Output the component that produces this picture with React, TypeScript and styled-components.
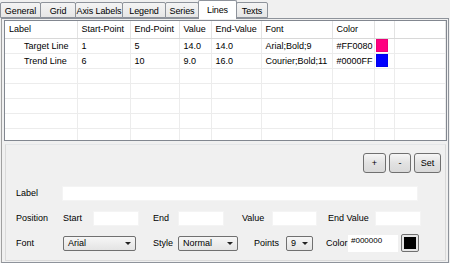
import React from "react";
import styled, { createGlobalStyle } from "styled-components";

const GlobalStyle = createGlobalStyle`
	html, body {
		margin: 0;
		padding: 0;
		background: #f0f0f0;
	}
	* {
		box-sizing: border-box;
	}
`;

const Window = styled.div`
	width: 450px;
	height: 263px;
	background: #f0f0f0;
	font-family: "Liberation Sans", Arial, sans-serif;
	font-size: 9px;
	color: #000;
	display: flex;
	flex-direction: column;
	overflow: hidden;
`;

const TabBar = styled.div`
	display: flex;
	align-items: flex-end;
	height: 19px;
	position: relative;
	z-index: 1;
`;

const Tab = styled.div<{ $width: number; $active?: boolean }>`
	width: ${p => p.$width}px;
	height: ${p => (p.$active ? 19 : 16)}px;
	margin-bottom: ${p => (p.$active ? -1 : 0)}px;
	display: flex;
	align-items: center;
	justify-content: center;
	padding-top: ${p => (p.$active ? 0 : 1)}px;
	border: 1px solid #8e939b;
	border-bottom: ${p => (p.$active ? "none" : "1px solid #8e939b")};
	margin-right: -1px;
	border-radius: 2px 2px 0 0;
	background: ${p => (p.$active ? "#fff" : "linear-gradient(#f4f4f4, #e6e6e6)")};
	white-space: nowrap;
	letter-spacing: -0.1px;
`;

const Pane = styled.div`
	flex: 1;
	border: 1px solid #8e939b;
	border-left-color: #a0a0a0;
	margin: 0 1px 3px 1px;
	padding: 1px 1px 1px 1px;
	display: flex;
	flex-direction: column;
	gap: 3px;
`;

const TableFrame = styled.div`
	height: 121px;
	margin-left: 1px;
	background: #fff;
	border: 1px solid #828790;
	overflow: hidden;
`;

const Grid = styled.table`
	border-collapse: collapse;
	table-layout: fixed;
	width: 100%;
`;

const HeadCell = styled.th<{ $width?: number }>`
	width: ${p => (p.$width ? `${p.$width}px` : "auto")};
	height: 17px;
	padding: 0 0 0 4px;
	text-align: left;
	font-weight: normal;
	border-right: 1px solid #e3e3e3;
	border-bottom: 1px solid #d8d8d8;
	white-space: nowrap;
	overflow: hidden;
`;

const Cell = styled.td<{ $indent?: number }>`
	height: 15px;
	padding: 0 0 0 ${p => p.$indent ?? 4}px;
	border-right: 1px solid #ececec;
	border-bottom: 1px solid #ececec;
	white-space: nowrap;
	overflow: hidden;
`;

const Swatch = styled.div<{ $color: string }>`
	width: 12px;
	height: 13px;
	margin-left: 1px;
	background: ${p => p.$color};
	border: 1px solid rgba(0, 0, 0, 0.08);
`;

const EditorBox = styled.div`
	flex: 1;
	margin: 0 1px 0 2px;
	border: 1px solid #dadada;
	border-top-color: #e4e6e8;
	background: #f0f0f0;
	padding: 8px 4px 0 10px;
	display: flex;
	flex-direction: column;
`;

const ButtonRow = styled.div`
	display: flex;
	justify-content: flex-end;
	gap: 3px;
	height: 20px;
	margin-bottom: 12px;
`;

const Button = styled.div<{ $width: number }>`
	width: ${p => p.$width}px;
	height: 20px;
	display: flex;
	align-items: center;
	justify-content: center;
	border: 1px solid #707070;
	border-radius: 3px;
	background: linear-gradient(#f6f6f6, #e2e2e2 50%, #d9d9d9);
`;

const FormRow = styled.div`
	display: flex;
	align-items: center;
	height: 16px;
	margin-bottom: 9px;
`;

const FieldLabel = styled.span<{ $width: number; $lead?: number }>`
	width: ${p => p.$width}px;
	margin-left: ${p => p.$lead ?? 0}px;
	flex: none;
	white-space: nowrap;
`;

const TextBox = styled.div<{ $width?: number }>`
	width: ${p => (p.$width ? `${p.$width}px` : "auto")};
	flex: ${p => (p.$width ? "none" : "1")};
	margin-right: ${p => (p.$width ? 0 : 23)}px;
	height: 15px;
	background: #fff;
	border: 1px solid #f4f4f4;
`;

const ColorBox = styled.div`
	width: 50px;
	height: 17px;
	background: #fff;
	font-size: 8px;
	padding: 1px 0 0 3px;
	line-height: 9px;
`;

const Select = styled.div<{ $width: number }>`
	width: ${p => p.$width}px;
	flex: none;
	height: 15px;
	border: 1px solid #707070;
	border-radius: 2px;
	background: linear-gradient(#f6f6f6, #e4e4e4);
	display: flex;
	align-items: center;
	justify-content: space-between;
	padding: 0 4px;
`;

const Arrow = styled.span`
	width: 0;
	height: 0;
	border-left: 3px solid transparent;
	border-right: 3px solid transparent;
	border-top: 3px solid #222;
	margin-top: 1px;
`;

const ColorButton = styled.div`
	width: 18px;
	height: 18px;
	margin-left: 3px;
	border: 1px solid #707070;
	border-radius: 2px;
	background: #e6e6e6;
	padding: 2px;
	& > div {
		width: 100%;
		height: 100%;
		background: #000;
	}
`;

const tabs = [
	{ name: "General", width: 41 },
	{ name: "Grid", width: 36 },
	{ name: "Axis Labels", width: 48 },
	{ name: "Legend", width: 44 },
	{ name: "Series", width: 34 },
	{ name: "Lines", width: 39, active: true },
	{ name: "Texts", width: 32 }
];

const columns = [
	{ title: "Label", width: 72 },
	{ title: "Start-Point", width: 53 },
	{ title: "End-Point", width: 49 },
	{ title: "Value", width: 32 },
	{ title: "End-Value", width: 50 },
	{ title: "Font", width: 71 },
	{ title: "Color", width: 42 },
	{ title: "", width: 20 },
	{ title: "" }
];

const lines = [
	{ label: "Target Line", start: "1", end: "5", value: "14.0", endValue: "14.0", font: "Arial;Bold;9", color: "#FF0080" },
	{ label: "Trend Line", start: "6", end: "10", value: "9.0", endValue: "16.0", font: "Courier;Bold;11", color: "#0000FF" }
];

export default function App() {
	const emptyRows = 5;
	return (
		<>
			<GlobalStyle />
			<Window>
				<TabBar>
					{tabs.map(t => (
						<Tab key={t.name} $width={t.width} $active={t.active}>
							{t.name}
						</Tab>
					))}
				</TabBar>
				<Pane>
					<TableFrame>
						<Grid>
							<thead>
								<tr>
									{columns.map((c, i) => (
										<HeadCell key={i} $width={c.width}>
											{c.title}
										</HeadCell>
									))}
								</tr>
							</thead>
							<tbody>
								{lines.map(l => (
									<tr key={l.label}>
										<Cell $indent={19}>{l.label}</Cell>
										<Cell>{l.start}</Cell>
										<Cell>{l.end}</Cell>
										<Cell>{l.value}</Cell>
										<Cell>{l.endValue}</Cell>
										<Cell>{l.font}</Cell>
										<Cell>{l.color}</Cell>
										<Cell $indent={0}>
											<Swatch $color={l.color} />
										</Cell>
										<Cell />
									</tr>
								))}
								{Array.from({ length: emptyRows }).map((_, r) => (
									<tr key={"e" + r}>
										{columns.map((_, i) => (
											<Cell key={i} />
										))}
									</tr>
								))}
							</tbody>
						</Grid>
					</TableFrame>
					<EditorBox>
						<ButtonRow>
							<Button $width={23}>+</Button>
							<Button $width={22}>-</Button>
							<Button $width={27}>Set</Button>
						</ButtonRow>
						<FormRow>
							<FieldLabel $width={46}>Label</FieldLabel>
							<TextBox />
						</FormRow>
						<FormRow>
							<FieldLabel $width={47}>Position</FieldLabel>
							<FieldLabel $width={30}>Start</FieldLabel>
							<TextBox $width={46} />
							<FieldLabel $width={25} $lead={14}>End</FieldLabel>
							<TextBox $width={46} />
							<FieldLabel $width={30} $lead={18}>Value</FieldLabel>
							<TextBox $width={45} />
							<FieldLabel $width={47} $lead={11}>End Value</FieldLabel>
							<TextBox $width={46} />
						</FormRow>
						<FormRow>
							<FieldLabel $width={47}>Font</FieldLabel>
							<Select $width={73}>
								<span>Arial</span>
								<Arrow />
							</Select>
							<FieldLabel $width={25} $lead={17}>Style</FieldLabel>
							<Select $width={60}>
								<span>Normal</span>
								<Arrow />
							</Select>
							<FieldLabel $width={32} $lead={16}>Points</FieldLabel>
							<Select $width={27}>
								<span>9</span>
								<Arrow />
							</Select>
							<FieldLabel $width={22} $lead={13}>Color</FieldLabel>
							<ColorBox>#000000</ColorBox>
							<ColorButton>
								<div />
							</ColorButton>
						</FormRow>
					</EditorBox>
				</Pane>
			</Window>
		</>
	);
}
